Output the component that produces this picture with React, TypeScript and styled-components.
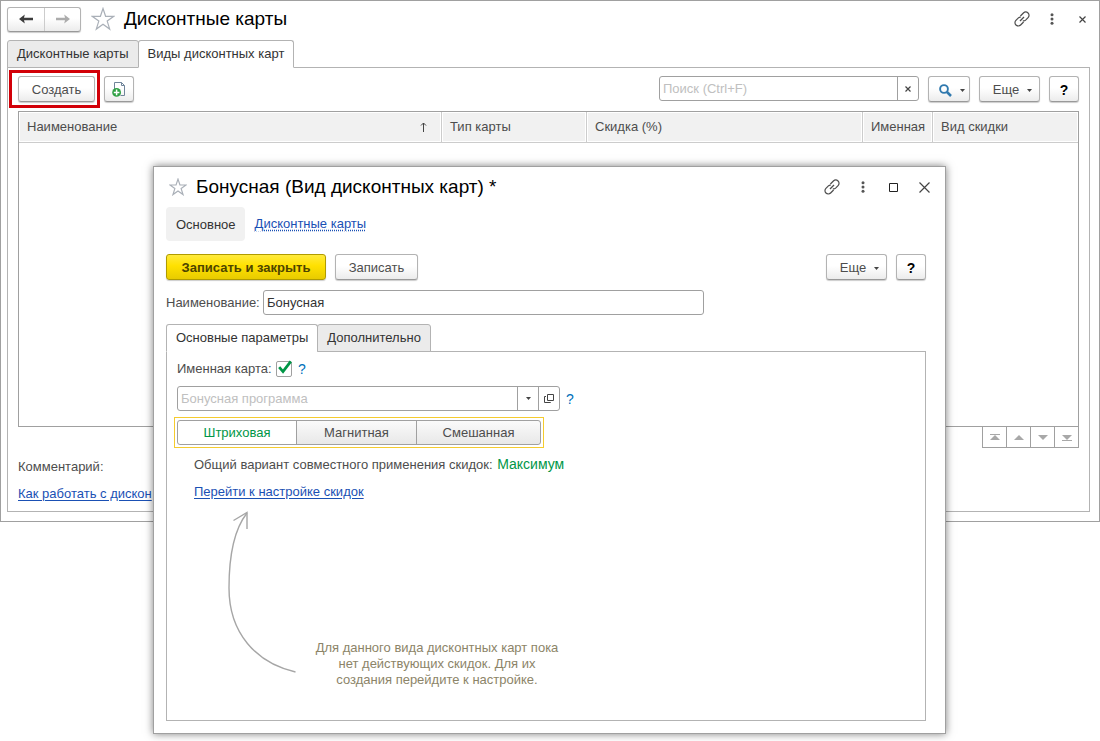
import React from "react";
import styled, { createGlobalStyle, css } from "styled-components";

const GlobalStyle = createGlobalStyle`
  * { box-sizing: border-box; }
  body {
    margin: 0;
    background: #fff;
    color: #4d4d4d;
    font: 13px/16px "Liberation Sans", Arial, sans-serif;
  }
  button, input { font: inherit; color: inherit; margin: 0; }
  button { cursor: pointer; }
  svg { display: block; flex: none; }
`;

const line = "#a0a0a0";
const softLine = "#b3b3b3";

const Desktop = styled.div`
  position: relative;
  min-height: 741px;
`;

const MainWindow = styled.main`
  border: 1px solid ${line};
  padding: 5px 9px 9px 6px;
`;

const Dialog = styled.section`
  position: absolute;
  top: 166px;
  left: 153px;
  right: 154px;
  background: #fff;
  border: 1px solid ${line};
  padding: 6px 19px 12px 12px;
  box-shadow: 0 0 8px rgba(0, 0, 0, 0.5);
`;

const TitleBar = styled.header<{ $dialog?: boolean }>`
  display: flex;
  align-items: center;
  height: ${(p) => (p.$dialog ? 28 : 26)}px;
  padding-left: ${(p) => (p.$dialog ? 3 : 0)}px;
`;

const Title = styled.h1`
  flex: 1;
  margin: 0 0 0 9px;
  font-size: 19px;
  line-height: 24px;
  font-weight: 400;
  color: #000;
`;

const IconButton = styled.button`
  display: flex;
  align-items: center;
  justify-content: center;
  padding: 0;
  border: 0;
  background: none;
  color: #4d4d4d;
`;

const WindowTools = styled.div<{ $dialog?: boolean }>`
  display: flex;
  align-items: center;
  margin-right: ${(p) => (p.$dialog ? -14 : -7)}px;

  ${IconButton} { width: ${(p) => (p.$dialog ? 31 : 30)}px; height: 24px; }
`;

const buttonFace = css`
  border: 1px solid ${softLine};
  border-bottom-color: #999;
  border-radius: 3px;
  background: linear-gradient(#fff 45%, #ececec);
  box-shadow: 0 1px 1px rgba(0, 0, 0, 0.2);
`;

const Button = styled.button<{ $width: number; $primary?: boolean; $strong?: boolean }>`
  ${buttonFace}
  display: flex;
  align-items: center;
  justify-content: center;
  width: ${(p) => p.$width}px;
  height: 26px;
  padding: 2px 0 0;
  white-space: nowrap;
  ${(p) => p.$strong && css`font-weight: 700; font-size: 14px; color: #000;`}
  ${(p) =>
    p.$primary &&
    css`
      font-weight: 700;
      color: #4d4400;
      border-color: #b09b00;
      background: linear-gradient(#ffea3d, #ffe100 45%, #e8cb00);
    `}
`;

const IconOnlyButton = styled(Button)`
  padding: 0;
`;

const MenuButton = styled(Button)`
  gap: 8px;
  padding-left: 6px;
`;

const History = styled.div`
  ${buttonFace}
  display: flex;
  height: 25px;
  margin-right: 10px;

  ${IconButton} { width: 36px; }
  ${IconButton} + ${IconButton} { border-left: 1px solid #ccc; }
`;

const Tabs = styled.div`
  display: flex;
  position: relative;
  z-index: 1;
  margin-bottom: -1px;
`;

const Tab = styled.button<{ $active?: boolean }>`
  height: 28px;
  padding: 0 9px;
  border: 1px solid ${softLine};
  border-radius: 3px 3px 0 0;
  background: ${(p) => (p.$active ? "#fff" : "#ebebeb")};
  border-bottom-color: ${(p) => (p.$active ? "#fff" : softLine)};
  color: #333;
  white-space: nowrap;

  & + & { margin-left: -1px; }
`;

const MainTabs = styled(Tabs)`
  margin-top: 8px;
`;

const MainPanel = styled.div`
  border: 1px solid ${softLine};
  padding: 2px 10px 9px 1px;
`;

const Toolbar = styled.div`
  display: flex;
  align-items: center;
`;

const Highlight = styled.div`
  border: 3px solid #d20008;
  padding: 3px 2px 3px 6px;
  margin-right: 4px;
`;

const Spacer = styled.div`
  flex: 1;
`;

const ToolGroup = styled.div`
  display: flex;
  gap: 9px;
`;

const Field = styled.div<{ $width: number }>`
  display: flex;
  width: ${(p) => p.$width}px;
  height: 25px;
  border: 1px solid ${line};
  border-radius: 3px;
  background: #fff;

  input {
    flex: 1;
    min-width: 0;
    padding: 0 2px 0 3px;
    border: 0;
    outline: 0;
    background: none;
    color: #333;
  }
  input::placeholder { color: #c0c0c0; opacity: 1; }
  ${IconButton} { width: 21px; border-left: 1px solid ${line}; }
`;

const ListArea = styled.div`
  margin: 3px 0 0 9px;
`;

const TableFrame = styled.div`
  min-height: 316px;
  border: 1px solid ${line};
`;

const Table = styled.table`
  width: 100%;
  table-layout: fixed;
  border-collapse: separate;
  border-spacing: 0;
`;

const HeadCell = styled.th<{ $width?: number }>`
  width: ${(p) => (p.$width ? p.$width + "px" : "auto")};
  height: 31px;
  padding: 0 8px;
  border-right: 1px solid #ccc;
  border-bottom: 1px solid #ccc;
  background: #f1f1f1;
  box-shadow: inset 0 0 0 1px #fff;
  font-weight: 400;
  text-align: left;
  white-space: nowrap;

  &:last-child { border-right: 0; }
`;

const SortHead = styled.span`
  display: flex;
  align-items: center;
  justify-content: space-between;
  padding-right: 6px;
`;

const Pager = styled.div`
  display: flex;
  width: 97px;
  margin: -1px 0 0 auto;
  border: 1px solid ${line};

  ${IconButton} { flex: 1; height: 20px; color: #a8a8a8; }
  ${IconButton} + ${IconButton} { border-left: 1px solid ${line}; }
`;

const Footer = styled.div`
  display: flex;
  flex-direction: column;
  align-items: flex-start;
  gap: 11px;
  margin: 11px 0 0 9px;
`;

const Link = styled.a<{ $dotted?: boolean }>`
  color: #1a50b4;
  text-underline-offset: 2px;
  white-space: nowrap;
  ${(p) => p.$dotted && css`text-decoration-style: dotted;`}
`;

const Nav = styled.nav`
  display: flex;
  align-items: center;
  gap: 10px;
  margin-top: 6px;
`;

const NavCurrent = styled.span`
  padding: 10px 9px 8px 10px;
  border-radius: 4px;
  background: #f1f1f1;
  color: #333;
`;

const Commands = styled.div`
  display: flex;
  gap: 9px;
  margin-top: 13px;
`;

const NameRow = styled.div`
  display: flex;
  align-items: center;
  margin: 10px 0 9px;

  label { width: 97px; }
`;

const DialogPanel = styled.div`
  min-height: 370px;
  border: 1px solid ${softLine};
  padding: 8px 7px;
`;

const CheckRow = styled.div`
  display: flex;
  align-items: center;
  height: 18px;
  padding-left: 3px;

  label { width: 99px; }
`;

const Check = styled.span`
  display: grid;
  width: 16px;
  height: 16px;

  input, svg { grid-area: 1 / 1; }
  input {
    appearance: none;
    width: 16px;
    height: 16px;
    border: 1px solid ${line};
    border-radius: 2px;
    background: #fff;
  }
  svg { display: none; z-index: 1; overflow: visible; pointer-events: none; }
  input:checked + svg { display: block; }
`;

const Hint = styled.button`
  padding: 0;
  margin-left: 6px;
  border: 0;
  background: none;
  color: #0070ba;
  font-size: 14px;
`;

const ProgramRow = styled.div`
  display: flex;
  align-items: center;
  margin-top: 8px;
  padding-left: 3px;
`;

const Switch = styled.div`
  display: grid;
  grid-template-columns: 120px 120px 1fr;
  width: 370px;
  height: 31px;
  margin-top: 6px;
  padding: 2px;
  border: 1px solid #f5cb2e;
`;

const SwitchOption = styled.label`
  display: flex;
  align-items: center;
  justify-content: center;
  border: 1px solid ${line};
  background: linear-gradient(#fafafa, #e8e8e8);

  & + & { margin-left: -1px; }
  &:first-child { border-radius: 3px 0 0 3px; }
  &:last-child { border-radius: 0 3px 3px 0; }
  &:has(input:checked) { background: #fff; color: #009646; }
  input { appearance: none; width: 0; height: 0; }
`;

const Info = styled.div`
  display: flex;
  flex-direction: column;
  align-items: flex-start;
  gap: 11px;
  padding: 8px 0 0 20px;
`;

const Value = styled.span`
  margin-left: 1px;
  color: #009646;
  font-size: 14px;
`;

const Guide = styled.div`
  display: flex;
  align-items: flex-start;
  padding: 11px 0 0 54px;
`;

const GuideText = styled.p`
  width: 252px;
  margin: 129px 0 0 15px;
  color: #8c8468;
  text-align: center;
`;

const Star = ({ size }: { size: number }) => (
  <svg width={size} height={size} viewBox="0 0 24 24" fill="#fff" stroke="#aab0b8" strokeWidth={size > 20 ? 1.2 : 1.6}>
    <path d="M12 1.5 14.6 9.3H22.8L16.2 14.1 18.7 22.1 12 17.2 5.3 22.1 7.8 14.1 1.2 9.3H9.4Z" />
  </svg>
);

const LinkIcon = () => (
  <svg width="18" height="18" viewBox="0 0 18 18" fill="none" stroke="#4d4d4d" strokeWidth="1.2">
    <path d="M7.4 6 10.4 3A3.2 3.2 0 0 1 15.1 7.6L12.6 10.1Q11.4 11.2 9.8 10.8" />
    <path d="M10.6 12 7.6 15A3.2 3.2 0 0 1 2.9 10.4L5.4 7.9Q6.4 7 7.8 7.2" />
    <path d="M7 11 11 7" />
  </svg>
);

const DotsIcon = () => (
  <svg width="4" height="12" viewBox="0 0 4 12" fill="#555">
    <circle cx="2" cy="1.8" r="1.5" />
    <circle cx="2" cy="6" r="1.5" />
    <circle cx="2" cy="10.2" r="1.5" />
  </svg>
);

const CrossIcon = ({ size, weight = 1.2 }: { size: number; weight?: number }) => (
  <svg width={size} height={size} viewBox={`0 0 ${size} ${size}`} stroke="#444" strokeWidth={weight}>
    <path d={`M.5.5 ${size - 0.5} ${size - 0.5}M${size - 0.5}.5.5 ${size - 0.5}`} />
  </svg>
);

const SquareIcon = () => (
  <svg width="9" height="9" viewBox="0 0 9 9" fill="none" stroke="#222" strokeWidth="1">
    <path d="M.5.5H8.5V8.5H.5Z" />
  </svg>
);

const ArrowIcon = ({ back }: { back?: boolean }) => (
  <svg width="14" height="10" viewBox="0 0 14 10" fill={back ? "#3c3c3c" : "#acacac"}>
    <path
      d={
        back
          ? "M0 5 5.8.4 5 3.8H14V6.2H5L5.8 9.6Z"
          : "M14 5 8.2.4 9 3.8H0V6.2H9L8.2 9.6Z"
      }
    />
  </svg>
);

const Caret = () => (
  <svg width="5" height="3" viewBox="0 0 5 3" fill="#444">
    <path d="M0 0H5L2.5 3Z" />
  </svg>
);

const NewDocIcon = () => (
  <svg width="14" height="15" viewBox="0 0 14 15" fill="none">
    <path d="M2.5 7V.5H9.5L12.5 3.5V13.5H8.5" stroke="#70859a" />
    <path d="M9.5.5V3.5H12.5" stroke="#70859a" />
    <circle cx="4.6" cy="10.4" r="4.4" fill="#2ea043" />
    <path d="M4.6 7.6V13.2M1.8 10.4H7.4" stroke="#fff" strokeWidth="1.5" />
  </svg>
);

const SearchIcon = () => (
  <svg width="13" height="13" viewBox="0 0 13 13" fill="none" stroke="#3079ae">
    <circle cx="5" cy="5" r="3.9" strokeWidth="1.9" />
    <path d="M8 8 12 12" strokeWidth="2.5" />
  </svg>
);

const OpenIcon = () => (
  <svg width="10" height="9" viewBox="0 0 10 9" fill="none" stroke="#444">
    <path d="M3.5.5H9.5V6.5H3.5Z" />
    <path d="M2 2.5H.5V8.5H6.5V8" />
  </svg>
);

const SortIcon = () => (
  <svg width="7" height="10" viewBox="0 0 7 10" fill="none" stroke="#444">
    <path d="M3.5 10V1M1 3.5 3.5 1 6 3.5" />
  </svg>
);

const PageIcon = ({ down, edge }: { down?: boolean; edge?: boolean }) => (
  <svg width="10" height="7" viewBox="0 0 10 7" fill="currentColor">
    <path d={down ? "M0 1H10L5 6Z" : "M0 6H10L5 1Z"} />
    {edge && <path d={down ? "M0 6H10V7H0Z" : "M0 0H10V1H0Z"} />}
  </svg>
);

const CheckIcon = () => (
  <svg width="16" height="16" viewBox="0 0 16 16" fill="none" stroke="#009646" strokeWidth="2.8">
    <path d="M3.2 6.2 7 10.6 14.8.4" />
  </svg>
);

const CurvedArrow = () => (
  <svg width="68" height="162" viewBox="0 0 68 162" fill="none" stroke="#a6a6a6" strokeWidth="1.4">
    <path d="M67.5 161C28 152 1 122 1 77C1 42 8 16 19 2" />
    <path d="M5.5 9.5 19 1.5V18" />
  </svg>
);

export default function App() {
  return (
    <Desktop>
      <GlobalStyle />
      <MainWindow>
        <TitleBar>
          <History>
            <IconButton aria-label="Назад"><ArrowIcon back /></IconButton>
            <IconButton aria-label="Вперед"><ArrowIcon /></IconButton>
          </History>
          <IconButton aria-label="В избранное"><Star size={24} /></IconButton>
          <Title>Дисконтные карты</Title>
          <WindowTools>
            <IconButton aria-label="Ссылка"><LinkIcon /></IconButton>
            <IconButton aria-label="Меню"><DotsIcon /></IconButton>
            <IconButton aria-label="Закрыть"><CrossIcon size={7} /></IconButton>
          </WindowTools>
        </TitleBar>

        <MainTabs role="tablist">
          <Tab role="tab" aria-selected={false}>Дисконтные карты</Tab>
          <Tab role="tab" aria-selected $active>Виды дисконтных карт</Tab>
        </MainTabs>

        <MainPanel>
          <Toolbar>
            <Highlight><Button $width={77}>Создать</Button></Highlight>
            <IconOnlyButton $width={30} aria-label="Создать копированием"><NewDocIcon /></IconOnlyButton>
            <Spacer />
            <ToolGroup>
              <Field $width={260}>
                <input aria-label="Поиск" placeholder="Поиск (Ctrl+F)" />
                <IconButton aria-label="Очистить"><CrossIcon size={6} /></IconButton>
              </Field>
              <MenuButton $width={42} aria-label="Найти"><SearchIcon /><Caret /></MenuButton>
              <MenuButton $width={61}>Еще <Caret /></MenuButton>
              <Button $width={30} $strong>?</Button>
            </ToolGroup>
          </Toolbar>

          <ListArea>
            <TableFrame>
              <Table>
                <thead>
                  <tr>
                    <HeadCell><SortHead>Наименование<SortIcon /></SortHead></HeadCell>
                    <HeadCell $width={145}>Тип карты</HeadCell>
                    <HeadCell $width={276}>Скидка (%)</HeadCell>
                    <HeadCell $width={70}>Именная</HeadCell>
                    <HeadCell $width={145}>Вид скидки</HeadCell>
                  </tr>
                </thead>
              </Table>
            </TableFrame>
            <Pager>
              <IconButton aria-label="В начало"><PageIcon edge /></IconButton>
              <IconButton aria-label="Вверх"><PageIcon /></IconButton>
              <IconButton aria-label="Вниз"><PageIcon down /></IconButton>
              <IconButton aria-label="В конец"><PageIcon down edge /></IconButton>
            </Pager>
          </ListArea>

          <Footer>
            <span>Комментарий:</span>
            <Link href="#help">Как работать с дискон</Link>
          </Footer>
        </MainPanel>
      </MainWindow>

      <Dialog role="dialog" aria-labelledby="dialog-title">
        <TitleBar $dialog>
          <IconButton aria-label="В избранное"><Star size={18} /></IconButton>
          <Title as="h2" id="dialog-title">Бонусная (Вид дисконтных карт) *</Title>
          <WindowTools $dialog>
            <IconButton aria-label="Ссылка"><LinkIcon /></IconButton>
            <IconButton aria-label="Меню"><DotsIcon /></IconButton>
            <IconButton aria-label="Развернуть"><SquareIcon /></IconButton>
            <IconButton aria-label="Закрыть"><CrossIcon size={11} /></IconButton>
          </WindowTools>
        </TitleBar>

        <Nav>
          <NavCurrent>Основное</NavCurrent>
          <Link href="#cards" $dotted>Дисконтные карты</Link>
        </Nav>

        <Commands>
          <Button $width={160} $primary>Записать и закрыть</Button>
          <Button $width={83}>Записать</Button>
          <Spacer />
          <MenuButton $width={61}>Еще <Caret /></MenuButton>
          <Button $width={30} $strong>?</Button>
        </Commands>

        <NameRow>
          <label htmlFor="name">Наименование:</label>
          <Field $width={441}><input id="name" defaultValue="Бонусная" /></Field>
        </NameRow>

        <Tabs role="tablist">
          <Tab role="tab" aria-selected $active>Основные параметры</Tab>
          <Tab role="tab" aria-selected={false}>Дополнительно</Tab>
        </Tabs>

        <DialogPanel>
          <CheckRow>
            <label htmlFor="personal">Именная карта:</label>
            <Check>
              <input id="personal" type="checkbox" defaultChecked />
              <CheckIcon />
            </Check>
            <Hint>?</Hint>
          </CheckRow>

          <ProgramRow>
            <Field $width={383}>
              <input aria-label="Бонусная программа" placeholder="Бонусная программа" />
              <IconButton aria-label="Выбрать"><Caret /></IconButton>
              <IconButton aria-label="Открыть"><OpenIcon /></IconButton>
            </Field>
            <Hint>?</Hint>
          </ProgramRow>

          <Switch role="radiogroup" aria-label="Тип карты">
            <SwitchOption><input type="radio" name="kind" defaultChecked />Штриховая</SwitchOption>
            <SwitchOption><input type="radio" name="kind" />Магнитная</SwitchOption>
            <SwitchOption><input type="radio" name="kind" />Смешанная</SwitchOption>
          </Switch>

          <Info>
            <span>Общий вариант совместного применения скидок: <Value>Максимум</Value></span>
            <Link href="#discounts">Перейти к настройке скидок</Link>
          </Info>

          <Guide>
            <CurvedArrow />
            <GuideText>
              Для данного вида дисконтных карт пока нет действующих скидок. Для их создания перейдите к настройке.
            </GuideText>
          </Guide>
        </DialogPanel>
      </Dialog>
    </Desktop>
  );
}
